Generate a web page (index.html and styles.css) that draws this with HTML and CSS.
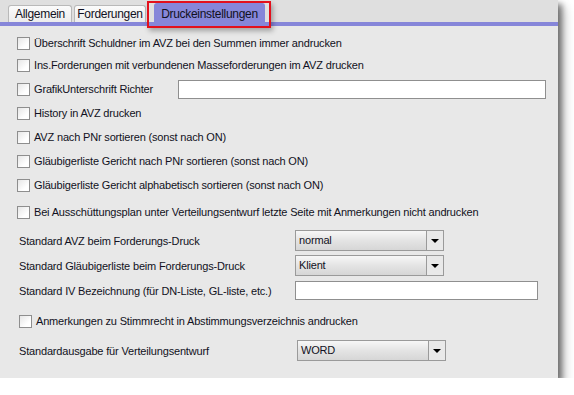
FILE: index.html
```html
<!DOCTYPE html>
<html lang="de">
<head>
    <meta charset="UTF-8">
    <title>Druckeinstellungen</title>
    <link rel="stylesheet" href="styles.css">
</head>
<body>
    <div class="window">
        <div class="tab-strip">
            <div class="tab">Allgemein</div>
            <div class="tab">Forderungen</div>
            <div class="tab active">Druckeinstellungen</div>
            <div class="highlight"></div>
        </div>

        <div class="content">
            <div class="check-row first">
                <span class="checkbox"></span>
                <span>Überschrift Schuldner im AVZ bei den Summen immer andrucken</span>
            </div>
            <div class="check-row">
                <span class="checkbox"></span>
                <span>Ins.Forderungen mit verbundenen Masseforderungen im AVZ drucken</span>
            </div>
            <div class="check-row">
                <span class="checkbox"></span>
                <span class="grafik-label">GrafikUnterschrift Richter</span>
                <span class="textbox grafik"></span>
            </div>
            <div class="check-row">
                <span class="checkbox"></span>
                <span>History in AVZ drucken</span>
            </div>
            <div class="check-row">
                <span class="checkbox"></span>
                <span>AVZ nach PNr sortieren (sonst nach ON)</span>
            </div>
            <div class="check-row">
                <span class="checkbox"></span>
                <span>Gläubigerliste Gericht nach PNr sortieren (sonst nach ON)</span>
            </div>
            <div class="check-row">
                <span class="checkbox"></span>
                <span>Gläubigerliste Gericht alphabetisch sortieren (sonst nach ON)</span>
            </div>
            <div class="check-row spaced">
                <span class="checkbox"></span>
                <span>Bei Ausschüttungsplan unter Verteilungsentwurf letzte Seite mit Anmerkungen nicht andrucken</span>
            </div>

            <div class="form-grid">
                <label>Standard AVZ beim Forderungs-Druck</label>
                <div class="combo"><span class="combo-value">normal</span><span class="combo-btn"></span></div>
                <label>Standard Gläubigerliste beim Forderungs-Druck</label>
                <div class="combo"><span class="combo-value">Klient</span><span class="combo-btn"></span></div>
                <label>Standard IV Bezeichnung (für DN-Liste, GL-liste, etc.)</label>
                <span class="textbox wide"></span>
            </div>

            <div class="check-row stimmrecht">
                <span class="checkbox"></span>
                <span>Anmerkungen zu Stimmrecht in Abstimmungsverzeichnis andrucken</span>
            </div>

            <div class="form-grid last">
                <label>Standardausgabe für Verteilungsentwurf</label>
                <div class="combo"><span class="combo-value">WORD</span><span class="combo-btn"></span></div>
            </div>
        </div>
    </div>
</body>
</html>
```

FILE: styles.css
```css
body {
    margin: 0;
    background: #ffffff;
    font-family: 'Liberation Sans', Arial, sans-serif;
    font-size: 11px;
    letter-spacing: -0.17px;
    color: #111122;
}

.window {
    width: 558px;
    height: 378px;
    background: #e8e8e8;
    box-shadow: 4px 4px 6px rgba(0, 0, 0, 0.5), 8px 8px 10px rgba(0, 0, 0, 0.15);
}

/* Tabs */
.tab-strip {
    position: relative;
    height: 22px;
    background: #dfdfdf;
    border-bottom: 4px solid #8686d9;
    display: flex;
    align-items: flex-end;
    padding-left: 8px;
    gap: 2px;
}

.tab {
    box-sizing: border-box;
    height: 17px;
    line-height: 17px;
    text-align: center;
    background: linear-gradient(#fbfbfb, #ececec);
    border: 1px solid #b9b9b9;
    border-bottom: none;
    border-radius: 3px 3px 0 0;
    font-size: 12px;
    letter-spacing: -0.3px;
    width: 64px;
}

.tab:nth-child(2) {
    width: 72px;
}

.tab.active {
    width: 111px;
    height: 19px;
    line-height: 21px;
    margin-left: 6px;
    background: #8686d9;
    border-color: #8686d9;
}

.highlight {
    position: absolute;
    left: 147px;
    top: 1px;
    width: 120px;
    height: 23px;
    border: 2px solid #e3101c;
    box-shadow: 2px 3px 5px rgba(0, 0, 0, 0.3);
}

/* Content */
.content {
    padding: 7px 0 0 17px;
}

.check-row {
    display: flex;
    align-items: center;
    height: 24px;
    gap: 4px;
}

.check-row.first {
    height: 20px;
}

.check-row.spaced {
    margin-top: 3px;
}

.checkbox {
    width: 11px;
    height: 11px;
    border: 1px solid #8e8e8e;
    background: linear-gradient(135deg, #e6e6e6, #ffffff 70%);
    flex-shrink: 0;
}

.grafik-label {
    width: 140px;
}

.textbox {
    display: block;
    background: #ffffff;
    border: 1px solid #8f8f8f;
    box-sizing: border-box;
}

.textbox.grafik {
    width: 368px;
    height: 19px;
}

.textbox.wide {
    width: 243px;
    height: 19px;
}

.form-grid {
    display: grid;
    grid-template-columns: 276px auto;
    grid-auto-rows: 25px;
    align-items: center;
    justify-items: start;
    margin: 4px 0 0 2px;
}

.form-grid.last {
    grid-template-columns: 278px auto;
    margin-top: 5px;
}

.combo {
    display: flex;
    width: 149px;
    height: 21px;
    box-sizing: border-box;
    border: 1px solid #9a9a9a;
    background: #f0f0f0;
}

.combo-value {
    flex: 1;
    padding-left: 3px;
    line-height: 19px;
    background: linear-gradient(#f7f7f7, #e4e4e4 50%, #d6d6d6);
    border-right: 1px solid #9a9a9a;
}

.combo-btn {
    width: 16px;
    position: relative;
    background: #e9e9e9;
}

.combo-btn::after {
    content: '';
    position: absolute;
    left: 4px;
    top: 8px;
    border-left: 4px solid transparent;
    border-right: 4px solid transparent;
    border-top: 4px solid #000000;
}

.check-row.stimmrecht {
    margin-top: 6px;
    padding-left: 2px;
}
```
